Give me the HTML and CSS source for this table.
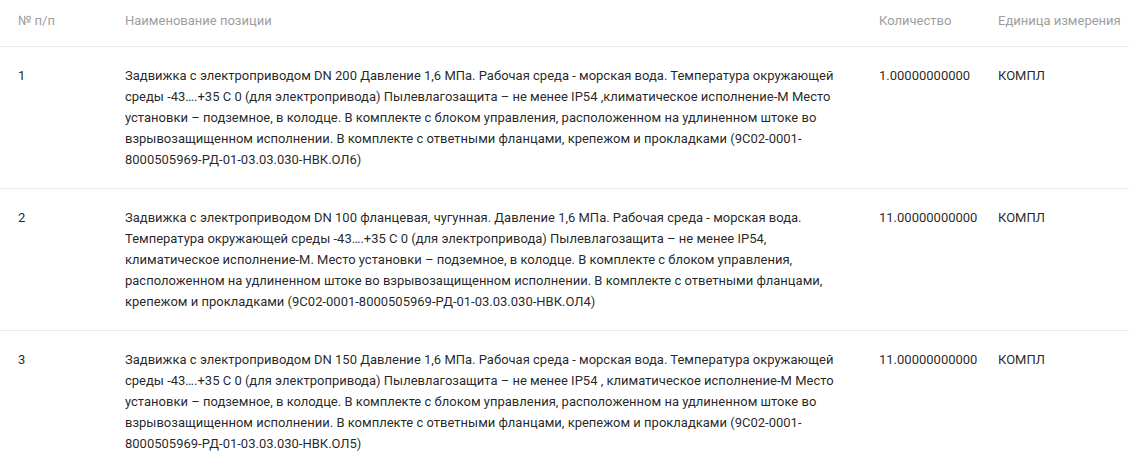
FILE: index.html
```html
<!DOCTYPE html>
<html lang="ru">
<head>
    <meta charset="UTF-8">
    <meta name="viewport" content="width=device-width, initial-scale=1.0">
    <title>Позиции</title>
    <link rel="stylesheet" href="styles.css">
</head>
<body>
    <table class="items">
        <colgroup>
            <col class="col-num">
            <col class="col-name">
            <col class="col-qty">
            <col class="col-unit">
        </colgroup>
        <thead>
            <tr>
                <th>№ п/п</th>
                <th>Наименование позиции</th>
                <th>Количество</th>
                <th>Единица измерения</th>
            </tr>
        </thead>
        <tbody>
            <tr>
                <td>1</td>
                <td>Задвижка с электроприводом DN 200 Давление 1,6 МПа. Рабочая среда - морская вода. Температура окружающей среды -43….+35 С 0 (для электропривода) Пылевлагозащита – не менее IP54 ,климатическое исполнение-М Место установки – подземное, в колодце. В комплекте с блоком управления, расположенном на удлиненном штоке во взрывозащищенном исполнении. В комплекте с ответными фланцами, крепежом и прокладками (9С02-0001-8000505969-РД-01-03.03.030-НВК.ОЛ6)</td>
                <td>1.00000000000</td>
                <td>КОМПЛ</td>
            </tr>
            <tr>
                <td>2</td>
                <td>Задвижка с электроприводом DN 100 фланцевая, чугунная. Давление 1,6 МПа. Рабочая среда - морская вода. Температура окружающей среды -43….+35 С 0 (для электропривода) Пылевлагозащита – не менее IP54, климатическое исполнение-М. Место установки – подземное, в колодце. В комплекте с блоком управления, расположенном на удлиненном штоке во взрывозащищенном исполнении. В комплекте с ответными фланцами, крепежом и прокладками (9С02-0001-8000505969-РД-01-03.03.030-НВК.ОЛ4)</td>
                <td>11.00000000000</td>
                <td>КОМПЛ</td>
            </tr>
            <tr>
                <td>3</td>
                <td>Задвижка с электроприводом DN 150 Давление 1,6 МПа. Рабочая среда - морская вода. Температура окружающей среды -43….+35 С 0 (для электропривода) Пылевлагозащита – не менее IP54 , климатическое исполнение-М Место установки – подземное, в колодце. В комплекте с блоком управления, расположенном на удлиненном штоке во взрывозащищенном исполнении. В комплекте с ответными фланцами, крепежом и прокладками (9С02-0001-8000505969-РД-01-03.03.030-НВК.ОЛ5)</td>
                <td>11.00000000000</td>
                <td>КОМПЛ</td>
            </tr>
        </tbody>
    </table>
</body>
</html>
```

FILE: styles.css
```css
/* Basic Styles */
body {
    font-family: Roboto, "Noto Sans", sans-serif;
    font-size: 13px;
    color: rgba(0, 0, 0, 0.87);
    background-color: #fff;
    margin: 0;
}

/* Items Table */
.items {
    width: 100%;
    table-layout: fixed;
    border-collapse: collapse;
}
.col-num {
    width: 107px;
}
.col-name {
    width: 754px;
}
.col-qty {
    width: 119px;
}
th, td {
    text-align: left;
    vertical-align: top;
    line-height: 21px;
    padding: 18px 17px 18px 18px;
    border-bottom: 1px solid #e8e8e8;
}
th {
    font-weight: 400;
    color: #9e9e9e;
    white-space: nowrap;
    padding-top: 10px;
    padding-bottom: 15px;
}
th:last-child, td:last-child {
    padding-right: 0;
}
tbody tr:last-child td {
    border-bottom: none;
}
```
